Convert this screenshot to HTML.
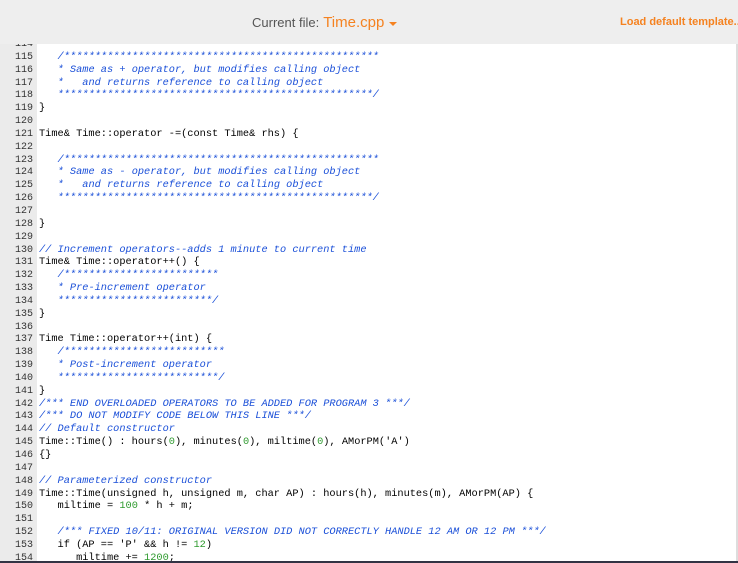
<!DOCTYPE html>
<html style="width:738px;height:563px;overflow:hidden"><head><style>
body{margin:0;width:738px;height:563px;overflow:hidden;background:#fff;position:relative;font-family:"Liberation Sans",sans-serif}
#hdr{position:absolute;left:0;top:0;width:738px;height:44px;background:#eeeeee;z-index:2}
#cf{position:absolute;left:252px;top:14px;font-size:13px;color:#555}
#cf b{font-weight:normal;color:#f58220;font-size:15px;margin-left:4px}
#caret{display:inline-block;width:0;height:0;border-left:4px solid transparent;border-right:4px solid transparent;border-top:4px solid #f58220;margin-left:5px;vertical-align:middle}
#ld{position:absolute;left:620px;top:16px;font-size:11px;font-weight:bold;color:#f58220;white-space:nowrap}
#gut{position:absolute;left:0;top:44px;width:37px;height:519px;background:#ebebeb}
#code{position:absolute;left:0;top:38px;font-family:"Liberation Mono",monospace;font-size:10.3px;line-height:12.85px;color:#000}
.l{height:12.85px;white-space:pre;overflow:hidden}
.n{display:inline-block;width:33px;text-align:right;color:#333;margin-right:6px;font-size:10px}
.c{color:#1a4fd8;font-style:italic}
.g{color:#2e9a2e}
#sb{position:absolute;right:0;top:44px;width:2px;height:519px;background:#ddd}
#bot{position:absolute;left:0;top:561px;width:738px;height:2px;background:#334}
</style></head><body>
<div id="gut"></div>
<div id="code"><div class="l"><span class="n">114</span></div><div class="l"><span class="n">115</span>   <span class="c">/***************************************************</span></div><div class="l"><span class="n">116</span>   <span class="c">* Same as + operator, but modifies calling object</span></div><div class="l"><span class="n">117</span>   <span class="c">*   and returns reference to calling object</span></div><div class="l"><span class="n">118</span>   <span class="c">***************************************************/</span></div><div class="l"><span class="n">119</span>}</div><div class="l"><span class="n">120</span></div><div class="l"><span class="n">121</span>Time&amp; Time::operator -=(const Time&amp; rhs) {</div><div class="l"><span class="n">122</span></div><div class="l"><span class="n">123</span>   <span class="c">/***************************************************</span></div><div class="l"><span class="n">124</span>   <span class="c">* Same as - operator, but modifies calling object</span></div><div class="l"><span class="n">125</span>   <span class="c">*   and returns reference to calling object</span></div><div class="l"><span class="n">126</span>   <span class="c">***************************************************/</span></div><div class="l"><span class="n">127</span></div><div class="l"><span class="n">128</span>}</div><div class="l"><span class="n">129</span></div><div class="l"><span class="n">130</span><span class="c">// Increment operators--adds 1 minute to current time</span></div><div class="l"><span class="n">131</span>Time&amp; Time::operator++() {</div><div class="l"><span class="n">132</span>   <span class="c">/*************************</span></div><div class="l"><span class="n">133</span>   <span class="c">* Pre-increment operator</span></div><div class="l"><span class="n">134</span>   <span class="c">*************************/</span></div><div class="l"><span class="n">135</span>}</div><div class="l"><span class="n">136</span></div><div class="l"><span class="n">137</span>Time Time::operator++(int) {</div><div class="l"><span class="n">138</span>   <span class="c">/**************************</span></div><div class="l"><span class="n">139</span>   <span class="c">* Post-increment operator</span></div><div class="l"><span class="n">140</span>   <span class="c">**************************/</span></div><div class="l"><span class="n">141</span>}</div><div class="l"><span class="n">142</span><span class="c">/*** END OVERLOADED OPERATORS TO BE ADDED FOR PROGRAM 3 ***/</span></div><div class="l"><span class="n">143</span><span class="c">/*** DO NOT MODIFY CODE BELOW THIS LINE ***/</span></div><div class="l"><span class="n">144</span><span class="c">// Default constructor</span></div><div class="l"><span class="n">145</span>Time::Time() : hours(<span class="g">0</span>), minutes(<span class="g">0</span>), miltime(<span class="g">0</span>), AMorPM('A')</div><div class="l"><span class="n">146</span>{}</div><div class="l"><span class="n">147</span></div><div class="l"><span class="n">148</span><span class="c">// Parameterized constructor</span></div><div class="l"><span class="n">149</span>Time::Time(unsigned h, unsigned m, char AP) : hours(h), minutes(m), AMorPM(AP) {</div><div class="l"><span class="n">150</span>   miltime = <span class="g">100</span> * h + m;</div><div class="l"><span class="n">151</span></div><div class="l"><span class="n">152</span>   <span class="c">/*** FIXED 10/11: ORIGINAL VERSION DID NOT CORRECTLY HANDLE 12 AM OR 12 PM ***/</span></div><div class="l"><span class="n">153</span>   if (AP == 'P' &amp;&amp; h != <span class="g">12</span>)</div><div class="l"><span class="n">154</span>      miltime += <span class="g">1200</span>;</div></div>
<div id="hdr"><div id="cf">Current file:<b>Time.cpp</b><span id="caret"></span></div><div id="ld">Load default template...</div></div>
<div id="sb"></div>
<div id="bot"></div>
</body></html>
